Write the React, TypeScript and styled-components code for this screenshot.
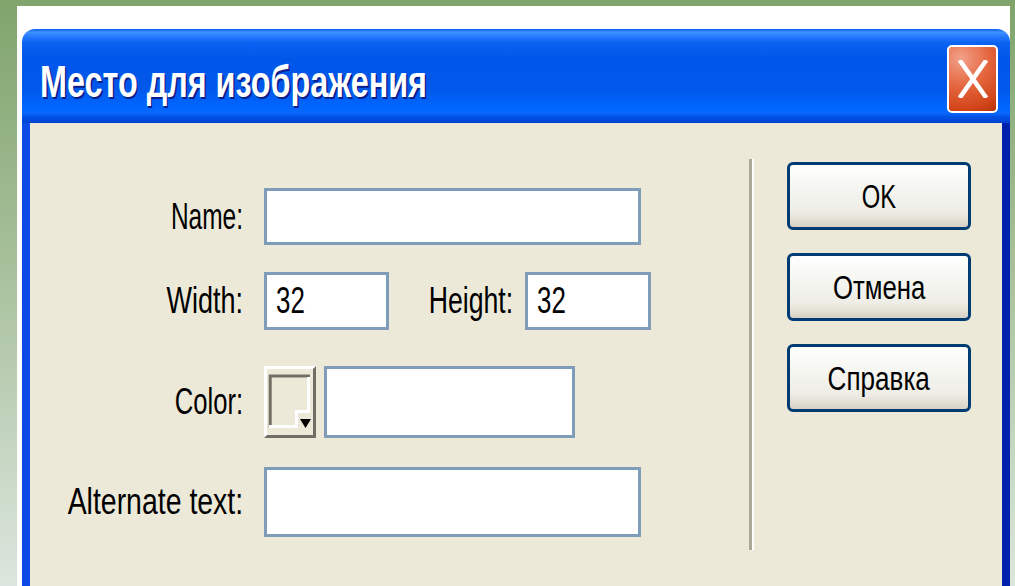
import React from 'react'
import styled, { createGlobalStyle } from 'styled-components'

const GlobalStyle = createGlobalStyle`
  html, body {
    margin: 0;
    height: 100%;
  }
  body {
    overflow: hidden;
    background: linear-gradient(180deg, #80a46c 0%, #a7c09b 45%, #dce6de 100%);
    font-family: 'Liberation Sans', Arial, sans-serif;
  }
`

const Page = styled.div`
  height: 586px;
  box-sizing: border-box;
  padding: 6px 5px 0 17px;
  display: flex;
`

const Sheet = styled.div`
  flex: 1;
  display: flex;
  background: #ffffff;
  padding: 23px 0 0 5px;
`

const Window = styled.div`
  flex: 1;
  display: flex;
  flex-direction: column;
  border-radius: 13px 13px 0 0;
  overflow: hidden;
`

const TitleBar = styled.div`
  height: 94px;
  flex: none;
  display: flex;
  align-items: flex-start;
  justify-content: space-between;
  padding: 0 12px 0 18px;
  background: linear-gradient(
    180deg,
    #0a5ae8 0px,
    #3d93ff 3px,
    #2a7cff 7px,
    #0a62f2 14px,
    #0056e8 30px,
    #0058ea 60px,
    #0066ff 78px,
    #0868ff 84px,
    #0052e2 88px,
    #003fd4 94px
  );
`

const TitleText = styled.div`
  margin-top: 31px;
  font-size: 44px;
  font-weight: bold;
  line-height: 1;
  color: #ffffff;
  text-shadow: 2px 2px 0 #0a1f8c;
`

const CloseButton = styled.div`
  margin-top: 16px;
  width: 51px;
  height: 68px;
  box-sizing: border-box;
  border: 2px solid #ffffff;
  border-radius: 5px;
  display: flex;
  align-items: center;
  justify-content: center;
  background: radial-gradient(circle at 25% 18%, #f2a08a 0%, #e4663e 45%, #d2461a 80%, #b83208 100%);
`

const Frame = styled.div`
  flex: 1;
  display: flex;
  background: #ece9d8;
  border-left: 8px solid #0b4ae6;
  border-right: 8px solid #0021ad;
`

const Form = styled.div`
  width: 719px;
  flex: none;
  display: flex;
  flex-direction: column;
  padding-top: 65px;
`

const FieldRow = styled.div<{ $top?: number }>`
  display: flex;
  align-items: center;
  margin-top: ${p => p.$top ?? 0}px;
`

const Label = styled.div<{ $width: number; $space: number }>`
  width: ${p => p.$width}px;
  margin-right: ${p => p.$space}px;
  flex: none;
  display: flex;
  justify-content: flex-end;
  font-size: 36px;
  line-height: 1;
  color: #000000;
`

const Caption = styled.span<{ $origin?: string; $scale?: number }>`
  display: inline-block;
  flex: none;
  white-space: nowrap;
  transform: scaleX(${p => p.$scale ?? 0.72});
  transform-origin: ${p => p.$origin ?? 'left'} center;
`

const TextBox = styled.div<{ $w: number; $h: number }>`
  width: ${p => p.$w}px;
  height: ${p => p.$h}px;
  flex: none;
  box-sizing: border-box;
  border: 3px solid #7f9db9;
  background: #ffffff;
  padding-left: 9px;
  display: flex;
  align-items: center;
  font-size: 36px;
  line-height: 1;
  color: #000000;
`

const Swatch = styled.div`
  width: 52px;
  height: 72px;
  flex: none;
  box-sizing: border-box;
  margin-right: 8px;
  border-top: 3px solid #ffffff;
  border-left: 3px solid #ffffff;
  border-right: 3px solid #716f64;
  border-bottom: 3px solid #716f64;
  background: #ece9d8;
  display: flex;
`

const Separator = styled.div`
  width: 5px;
  height: 391px;
  flex: none;
  margin-top: 36px;
  background: linear-gradient(90deg, #aca899 0 3px, #ffffff 3px 5px);
`

const ButtonColumn = styled.div`
  width: 184px;
  flex: none;
  display: flex;
  flex-direction: column;
  gap: 23px;
  margin-left: 33px;
  padding-top: 39px;
`

const DialogButton = styled.div`
  height: 68px;
  box-sizing: border-box;
  border: 3px solid #003c74;
  border-radius: 6px;
  display: flex;
  align-items: center;
  justify-content: center;
  font-size: 33px;
  line-height: 1;
  color: #000000;
  background: linear-gradient(180deg, #ffffff 0%, #f6f6f2 35%, #eeede6 75%, #e2ded3 90%, #d6d0c5 100%);
`

function ColorGlyph() {
  return (
    <svg width="46" height="66" viewBox="0 0 46 66">
      <path d="M3.2 59 V7 H43" fill="none" stroke="#716f64" strokeWidth="3" />
      <path d="M41.5 8 V42.5 H29.5 V57.5 H2" fill="none" stroke="#ffffff" strokeWidth="3" />
      <polygon points="33,50 44,50 38.5,59" fill="#000000" />
    </svg>
  )
}

function CloseGlyph() {
  return (
    <svg width="30" height="38" viewBox="0 0 30 38">
      <path d="M3 2 L27 36 M27 2 L3 36" stroke="#ffffff" strokeWidth="4.5" strokeLinecap="square" />
    </svg>
  )
}

export default function App() {
  return (
    <>
      <GlobalStyle />
      <Page>
        <Sheet>
          <Window>
            <TitleBar>
              <TitleText>
                <Caption $scale={0.735}>Место для изображения</Caption>
              </TitleText>
              <CloseButton>
                <CloseGlyph />
              </CloseButton>
            </TitleBar>
            <Frame>
              <Form>
                <FieldRow>
                  <Label $width={213} $space={21}>
                    <Caption $origin="right" $scale={0.68}>Name:</Caption>
                  </Label>
                  <TextBox $w={377} $h={57} />
                </FieldRow>
                <FieldRow $top={27}>
                  <Label $width={213} $space={21}>
                    <Caption $origin="right" $scale={0.75}>Width:</Caption>
                  </Label>
                  <TextBox $w={125} $h={58}>
                    <Caption>32</Caption>
                  </TextBox>
                  <Label $width={124} $space={12}>
                    <Caption $origin="right" $scale={0.74}>Height:</Caption>
                  </Label>
                  <TextBox $w={126} $h={58}>
                    <Caption>32</Caption>
                  </TextBox>
                </FieldRow>
                <FieldRow $top={36}>
                  <Label $width={213} $space={21}>
                    <Caption $origin="right" $scale={0.71}>Color:</Caption>
                  </Label>
                  <Swatch>
                    <ColorGlyph />
                  </Swatch>
                  <TextBox $w={251} $h={72} />
                </FieldRow>
                <FieldRow $top={29}>
                  <Label $width={213} $space={21}>
                    <Caption $origin="right" $scale={0.79}>Alternate text:</Caption>
                  </Label>
                  <TextBox $w={377} $h={70} />
                </FieldRow>
              </Form>
              <Separator />
              <ButtonColumn>
                <DialogButton>
                  <Caption $origin="center" $scale={0.72}>OK</Caption>
                </DialogButton>
                <DialogButton>
                  <Caption $origin="center" $scale={0.78}>Отмена</Caption>
                </DialogButton>
                <DialogButton>
                  <Caption $origin="center" $scale={0.79}>Справка</Caption>
                </DialogButton>
              </ButtonColumn>
            </Frame>
          </Window>
        </Sheet>
      </Page>
    </>
  )
}
